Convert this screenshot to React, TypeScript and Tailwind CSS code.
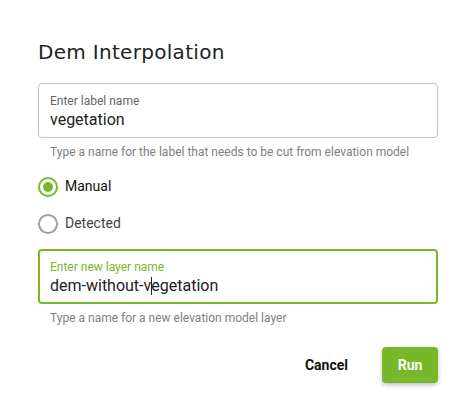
import React from "react";

export default function App() {
  return (
    <div
      className="w-[476px] h-[416px] bg-white relative"
      style={{ fontFamily: "Roboto, 'Liberation Sans', sans-serif" }}
    >
      <div className="pl-[38px] pt-[38px] w-[438px]">
        <h1
          className="text-[20px] leading-[28px] text-[#222] tracking-[0.3px]"
          style={{ fontFamily: "'DejaVu Sans', sans-serif" }}
        >
          Dem Interpolation
        </h1>
        <div className="mt-[17px] h-[55px] border border-[#c4c4c4] rounded-[4px] pl-[11px] pt-[9px]">
          <div className="text-[12px] leading-[16px] text-[#666]">Enter label name</div>
          <div className="text-[16px] leading-[20px] text-[#222] mt-[1px]">vegetation</div>
        </div>
        <div className="pl-[12px] text-[12px] leading-[16px] text-[#808080] mt-[6px]">
          Type a name for the label that needs to be cut from elevation model
        </div>
        <div className="mt-[8px] flex flex-col">
          <label className="flex items-center h-[37px]">
            <span className="w-[20px] h-[20px] rounded-full border-2 border-[#76b82a] flex items-center justify-center">
              <span className="w-[10px] h-[10px] rounded-full bg-[#76b82a]" />
            </span>
            <span className="ml-[7px] text-[14px] text-[#111]">Manual</span>
          </label>
          <label className="flex items-center h-[37px]">
            <span className="w-[20px] h-[20px] rounded-full border-2 border-[#9e9e9e]" />
            <span className="ml-[7px] text-[14px] text-[#444]">Detected</span>
          </label>
        </div>
        <div className="mt-[7px] h-[55px] border-2 border-[#76b82a] rounded-[4px] pl-[10px] pt-[8px]">
          <div className="text-[12px] leading-[16px] text-[#76b82a]">Enter new layer name</div>
          <div className="text-[16px] leading-[20px] text-[#222] mt-[1px] flex items-center">
            <span>dem-without-v</span>
            <span className="w-px h-[18px] bg-[#222] -mx-[0.5px]" />
            <span>egetation</span>
          </div>
        </div>
        <div className="pl-[12px] text-[12px] leading-[16px] text-[#808080] mt-[6px]">
          Type a name for a new elevation model layer
        </div>
        <div className="mt-[21px] flex justify-end items-center gap-[22px]">
          <button className="h-[36px] px-[12px] text-[14px] font-bold text-[#111]">Cancel</button>
          <button className="w-[56px] h-[36px] rounded-[4px] bg-[#76b82a] text-white text-[14px] font-bold shadow-[0_2px_4px_rgba(0,0,0,0.25)]">
            Run
          </button>
        </div>
      </div>
    </div>
  );
}
